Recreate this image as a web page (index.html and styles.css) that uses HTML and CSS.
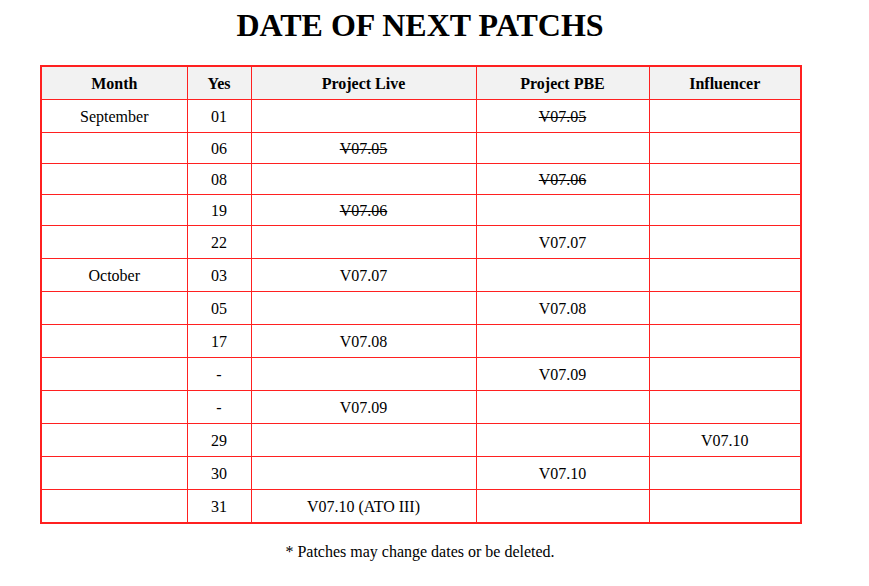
FILE: index.html
```html
<!DOCTYPE html>
<html>
<head>
<meta charset="utf-8">
<link rel="stylesheet" href="styles.css">
</head>
<body>
<div class="page">
  <h1 class="title">DATE OF NEXT PATCHS</h1>
  <table class="patches">
    <colgroup>
      <col class="c-month"><col class="c-yes"><col class="c-live"><col class="c-pbe"><col class="c-inf">
    </colgroup>
    <thead>
      <tr><th>Month</th><th>Yes</th><th>Project Live</th><th>Project PBE</th><th>Influencer</th></tr>
    </thead>
    <tbody>
      <tr><td>September</td><td>01</td><td></td><td><del>V07.05</del></td><td></td></tr>
      <tr class="tight"><td></td><td>06</td><td><del>V07.05</del></td><td></td><td></td></tr>
      <tr class="tight"><td></td><td>08</td><td></td><td><del>V07.06</del></td><td></td></tr>
      <tr class="tight"><td></td><td>19</td><td><del>V07.06</del></td><td></td><td></td></tr>
      <tr><td></td><td>22</td><td></td><td>V07.07</td><td></td></tr>
      <tr><td>October</td><td>03</td><td>V07.07</td><td></td><td></td></tr>
      <tr><td></td><td>05</td><td></td><td>V07.08</td><td></td></tr>
      <tr><td></td><td>17</td><td>V07.08</td><td></td><td></td></tr>
      <tr><td></td><td>-</td><td></td><td>V07.09</td><td></td></tr>
      <tr><td></td><td>-</td><td>V07.09</td><td></td><td></td></tr>
      <tr><td></td><td>29</td><td></td><td></td><td>V07.10</td></tr>
      <tr><td></td><td>30</td><td></td><td>V07.10</td><td></td></tr>
      <tr><td></td><td>31</td><td>V07.10 (ATO III)</td><td></td><td></td></tr>
    </tbody>
  </table>
  <p class="note">* Patches may change dates or be deleted.</p>
</div>
</body>
</html>
```
FILE: styles.css
```css
html, body {
  margin: 0;
  padding: 0;
  background: #fff;
}
body {
  font-family: "Liberation Serif", "Times New Roman", serif;
  color: #000;
  font-size: 16px;
}
.page {
  width: 760px;
  margin-left: 40px;
  padding-top: 7px;
}
.title {
  margin: 0;
  height: 58px;
  font-size: 32px;
  font-weight: bold;
  text-align: center;
  line-height: 36px;
}
.patches {
  width: 760px;
  border-collapse: collapse;
  border: 2px solid #ff2020;
  table-layout: fixed;
}
.c-month { width: 146px; }
.c-yes { width: 64px; }
.c-live { width: 225px; }
.c-pbe { width: 173px; }
.c-inf { width: 152px; }
.patches th, .patches td {
  border: 1px solid #ff2020;
  padding: 0;
  text-align: center;
  vertical-align: middle;
  font-size: 16px;
  line-height: 18px;
}
.patches th {
  background: #f2f2f2;
  font-weight: bold;
  height: 30px;
  padding-top: 2px;
}
.patches td {
  height: 31px;
  padding-top: 1px;
}
.patches .tight td {
  height: 29px;
}
.note {
  margin: 19px 0 0;
  text-align: center;
  font-size: 16px;
}
```
